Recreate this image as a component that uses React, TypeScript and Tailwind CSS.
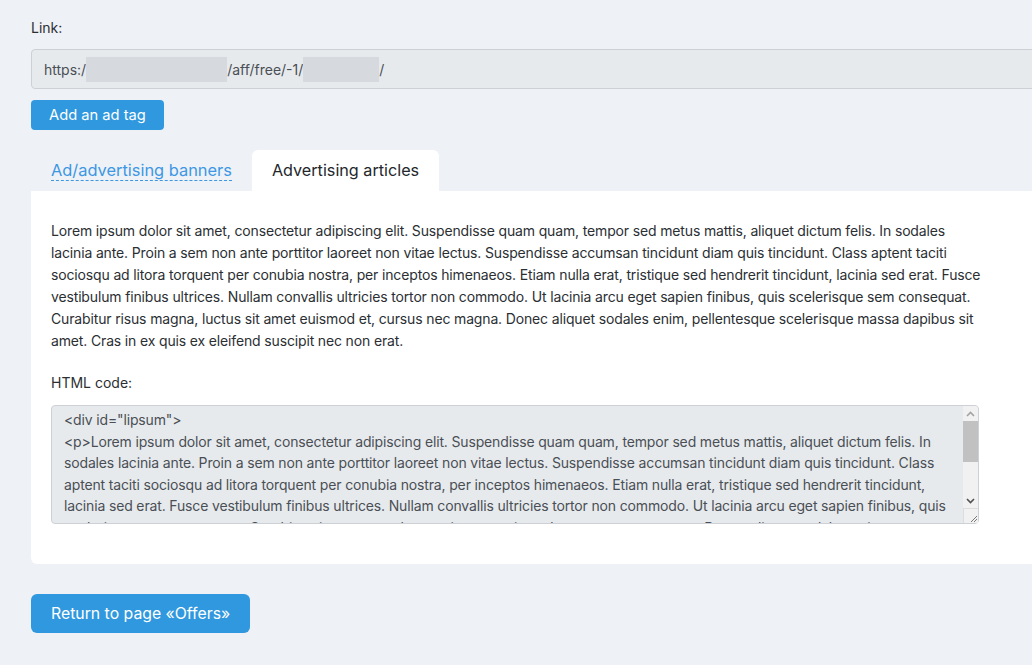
import React from "react";

const P =
  "Lorem ipsum dolor sit amet, consectetur adipiscing elit. Suspendisse quam quam, tempor sed metus mattis, aliquet dictum felis. In sodales lacinia ante. Proin a sem non ante porttitor laoreet non vitae lectus. Suspendisse accumsan tincidunt diam quis tincidunt. Class aptent taciti sociosqu ad litora torquent per conubia nostra, per inceptos himenaeos. Etiam nulla erat, tristique sed hendrerit tincidunt, lacinia sed erat. Fusce vestibulum finibus ultrices. Nullam convallis ultricies tortor non commodo. Ut lacinia arcu eget sapien finibus, quis scelerisque sem consequat. Curabitur risus magna, luctus sit amet euismod et, cursus nec magna. Donec aliquet sodales enim, pellentesque scelerisque massa dapibus sit amet. Cras in ex quis ex eleifend suscipit nec non erat.";

export default function App() {
  return (
    <div
      className="w-full h-[665px] overflow-hidden bg-[#eef1f6] text-[#2b2f33]"
      style={{ fontFamily: "Inter, 'Noto Sans', sans-serif" }}
    >
      <div className="w-[1120px] pl-[31px] pt-[18px]">
        <div className="text-[14px] leading-[20px]">Link:</div>
        <div className="mt-[11px] h-[40px] rounded-[4px] border border-[#cdd1d5] bg-[#e7eaed] flex items-center pl-[12px] text-[14px] text-[#4a4f55]">
          <span>https:/</span>
          <span className="inline-block w-[141px] h-[25px] bg-[#d6d9dd]" />
          <span>/aff/free/-1/</span>
          <span className="inline-block w-[76px] h-[25px] bg-[#d6d9dd]" />
          <span>/</span>
        </div>
        <button className="mt-[11px] h-[30px] px-[18px] rounded-[4px] bg-[#3098de] text-white text-[14.7px] leading-[30px]">
          Add an ad tag
        </button>
        <div className="mt-[20px] flex h-[41px] items-stretch">
          <div className="px-[20px] flex items-center text-[16.4px] text-[#3d97e3]">
            <span className="border-b border-dashed border-[#3d97e3] leading-[20px]">
              Ad/advertising banners
            </span>
          </div>
          <div className="px-[20px] flex items-center text-[16.2px] text-[#23272b] bg-white rounded-t-[6px]">
            Advertising articles
          </div>
        </div>
        <div className="bg-white rounded-b-[6px] rounded-tr-[6px] pl-[20px] pt-[29px] pb-[40px]">
          <p className="w-[932px] text-[14px] leading-[22px] tracking-[-0.15px] text-[#2b2f33]">{P}</p>
          <div className="mt-[20px] text-[14px] leading-[22px]">HTML code:</div>
          <div className="relative mt-[11px] w-[928px] h-[119px]">
            <textarea
              readOnly
              className="block w-full h-full rounded-[4px] border border-[#cdd1d5] bg-[#e7eaed] pl-[12px] pr-[17px] pt-[3px] text-[14px] leading-[21.5px] tracking-[-0.15px] text-[#4a4f55] overflow-hidden resize-none"
              style={{ fontFamily: "Inter, 'Noto Sans', sans-serif" }}
              value={`<div id="lipsum">\n<p>${P}</p>\n</div>`}
            />
            <div className="absolute right-[1px] top-[1px] bottom-[1px] w-[15px] bg-[#f1f1f1] flex flex-col rounded-tr-[3px]">
              <div className="h-[15px] flex items-center justify-center">
                <svg width="9" height="6" viewBox="0 0 9 6">
                  <path d="M1 5 L4.5 1.5 L8 5" fill="none" stroke="#a3a3a3" strokeWidth="1.6" />
                </svg>
              </div>
              <div className="h-[41px] bg-[#c1c1c1]" />
              <div className="flex-1" />
              <div className="h-[15px] flex items-center justify-center">
                <svg width="9" height="6" viewBox="0 0 9 6">
                  <path d="M1 1 L4.5 4.5 L8 1" fill="none" stroke="#505050" strokeWidth="1.6" />
                </svg>
              </div>
              <div className="h-[15px] bg-[#f1f1f1] border-t border-l border-[#dcdcdc] flex items-end justify-end">
                <svg width="10" height="10" viewBox="0 0 10 10">
                  <path d="M9 3 L3 9 M9 6 L6 9" stroke="#7a7a7a" strokeWidth="1" />
                </svg>
              </div>
            </div>
          </div>
        </div>
        <button className="mt-[30px] h-[39px] px-[20px] rounded-[6px] bg-[#3098de] text-white text-[15.8px]">
          Return to page «Offers»
        </button>
      </div>
    </div>
  );
}
